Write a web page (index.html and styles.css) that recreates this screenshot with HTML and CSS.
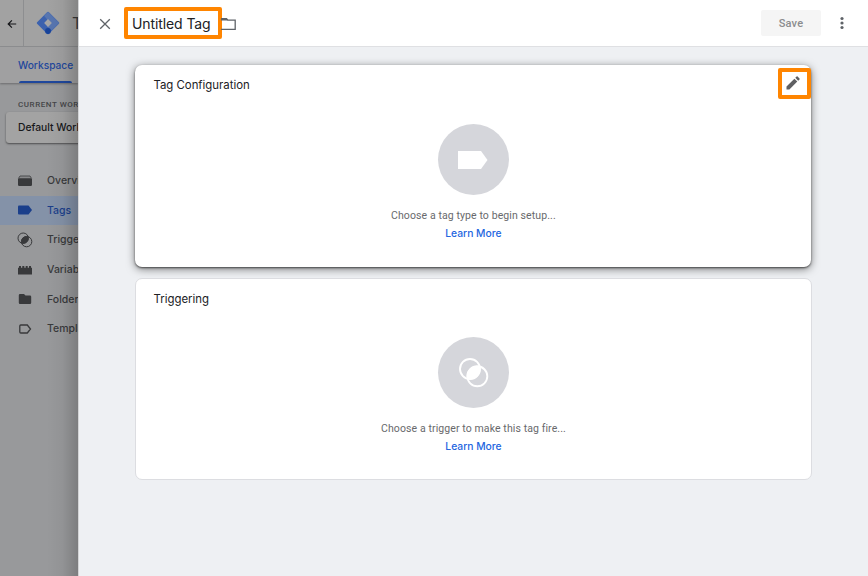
FILE: index.html
```html
<!DOCTYPE html>
<html lang="en">
<head>
<meta charset="utf-8">
<title>Untitled Tag</title>
<link rel="stylesheet" href="styles.css">
</head>
<body>
<div class="app">
  <aside class="sidebar">
    <div class="brand">
      <div class="back"><svg width="10" height="10" viewBox="0 0 10 10"><path d="M9.200 5H1.300M4.900 1.300L1.200 5l3.700 3.700" fill="none" stroke="#141518" stroke-width="1.200"/></svg></div>
      <svg class="logo" width="24" height="24" viewBox="0 0 24 24"><path d="M12 1.800L22.200 12 12 22.200 1.800 12z" fill="#3c62ae" stroke="#3c62ae" stroke-width="2" stroke-linejoin="round"/><path d="M9 4.800L12 1.800 22.200 12l-6.500 6.500-3.600-3.400 3.200-3.100z" fill="#5876b0" stroke="#5876b0" stroke-width="1.500" stroke-linejoin="round"/><path d="M12 8.100l3.900 3.900-3.900 3.900L8.100 12z" fill="#a4a5a7"/><circle cx="12" cy="20" r="2.900" fill="#17439a"/></svg>
      <span class="product">Tag</span>
    </div>
    <div class="tabs"><span class="tab">Workspace</span></div>
    <div class="caption">CURRENT WORKSPACE</div>
    <div class="workspace">Default Workspace</div>
    <nav class="nav">
      <a class="item"><svg width="16" height="14" viewBox="0 0 16 14"><path d="M3 2h10l1.600 2.500H1.400z" fill="#88898b" stroke="#4b4c4e"/><path d="M1 5h14v5.800q0 1.200-1.200 1.200H2.200Q1 12 1 10.800z" fill="#38393b"/></svg><span>Overview</span></a>
      <a class="item active"><svg width="16" height="14" viewBox="0 0 16 14"><path d="M2 2.500h9.500l3.500 4.500-3.500 4.500H2q-1 0-1-1v-7q0-1 1-1z" fill="#1b3f8b"/></svg><span>Tags</span></a>
      <a class="item"><svg width="16" height="16" viewBox="0 0 16 16"><g fill="none" stroke="#38393b"><circle cx="6.200" cy="6.200" r="5.200"/><circle cx="9.600" cy="9.600" r="5.200"/></g><path d="M4.550 11.250A5.200 5.200 0 0 1 11.250 4.550 5.200 5.200 0 0 1 4.550 11.250z" fill="#38393b"/></svg><span>Triggers</span></a>
      <a class="item"><svg width="16" height="14" viewBox="0 0 16 14"><path d="M1 11.500V4.700h1V3h2v1.700h1.300V3h2v1.700h1.400V3h2v1.700H12V3h2v1.700h1v6.800z" fill="#38393b"/></svg><span>Variables</span></a>
      <a class="item"><svg width="16" height="14" viewBox="0 0 16 14"><path d="M3 2h4l1.500 1.600H13q1.200 0 1.200 1.200v6q0 1.200-1.200 1.200H3q-1.200 0-1.200-1.200V3.200Q1.800 2 3 2z" fill="#38393b"/></svg><span>Folders</span></a>
      <a class="item"><svg width="16" height="14" viewBox="0 0 16 14"><path d="M3.800 3h6.500l3.200 4-3.200 4H3.800q-1 0-1-1V4q0-1 1-1z" fill="none" stroke="#38393b" stroke-width="1.300"/></svg><span>Templates</span></a>
    </nav>
  </aside>
  <main class="drawer">
    <header class="header">
      <svg class="close" width="12" height="12" viewBox="0 0 12 12"><path d="M1.200 1.200l9.600 9.600M10.800 1.200l-9.600 9.600" fill="none" stroke="#5f6368" stroke-width="1.300"/></svg>
      <div class="title">Untitled Tag</div>
      <svg class="folder" width="15" height="12" viewBox="0 0 15 12"><path d="M0 .7h5.500L7 2.200h7.200v9.100H0" fill="none" stroke="#5f6368" stroke-width="1.300"/><path d="M0 .5h5.500L7 2.500H0z" fill="#5f6368"/></svg>
      <button class="save">Save</button>
      <svg class="more" width="4" height="14" viewBox="0 0 4 14"><g fill="#5f6368"><circle cx="2" cy="2.500" r="1.600"/><circle cx="2" cy="7" r="1.600"/><circle cx="2" cy="11.500" r="1.600"/></g></svg>
    </header>
    <section class="card raised">
      <h2>Tag Configuration</h2>
      <span class="edit"><svg width="16" height="16" viewBox="0 0 16 16"><path d="M1.500 11.600l7.900-7.900 2.900 2.900-7.900 7.900H1.500zM10.300 2.800l1.300-1.300q.5-.5 1 0l1.900 1.900q.5.500 0 1l-1.300 1.300z" fill="#5f6063"/></svg></span>
      <div class="disc"><svg width="30" height="18" viewBox="0 0 30 18"><path d="M0 0h23l6.500 9L23 18H0z" fill="#fff"/></svg></div>
      <p>Choose a tag type to begin setup...</p>
      <a class="learn">Learn More</a>
    </section>
    <section class="card">
      <h2>Triggering</h2>
      <div class="disc"><svg width="30" height="30" viewBox="0 0 30 30"><g fill="none" stroke="#fff" stroke-width="1.900"><circle cx="11" cy="11" r="10"/><circle cx="18.300" cy="18.300" r="10"/></g><path d="M8.340 20.960A10 10 0 0 1 20.960 8.340 10 10 0 0 1 8.340 20.960z" fill="#fff"/></svg></div>
      <p>Choose a trigger to make this tag fire...</p>
      <a class="learn">Learn More</a>
    </section>
  </main>
</div>
</body>
</html>
```

FILE: styles.css
```css
* { box-sizing: border-box; }
body { margin: 0; font-family: Roboto, sans-serif; overflow: hidden; }
.app { display: flex; width: 868px; height: 576px; background: #eef0f3; }
.sidebar { position: relative; flex: none; width: 78px; overflow: hidden; background: #98999b; white-space: nowrap; }
.sidebar::after { content: ""; position: absolute; inset: 0; background: linear-gradient(90deg, transparent 60%, rgba(0,0,0,.04) 80%, rgba(0,0,0,.18)); }
.brand { display: flex; align-items: center; height: 47px; background: #a2a2a2; border-bottom: 1px solid #8e8f91; }
.back { flex: none; display: flex; align-items: center; width: 24px; height: 46px; padding: 2px 0 0 7px; border-right: 1px solid #8d8e90; }
.logo { margin-left: 12px; flex: none; }
.product { margin-left: 12px; font: 16px Inter, sans-serif; color: #38393b; }
.tabs { height: 36px; padding-left: 18px; background: #a0a0a1; box-shadow: 0 1px 2px rgba(0,0,0,.3); }
.tab { display: block; position: relative; width: 64px; height: 36px; font: 500 10.200px/37px Inter, sans-serif; color: #1f479c; }
.tab::after { content: ""; position: absolute; left: 1px; right: 10px; bottom: 0; height: 2px; border-radius: 2px 2px 0 0; background: #1f479c; }
.caption { margin: 15px 0 0 18px; font: 500 8px/13px Roboto, sans-serif; letter-spacing: .55px; color: #454648; }
.workspace { width: 110px; height: 31px; margin: 1px 0 0 6px; padding-left: 12px; border-radius: 3px; background: #a3a3a3; box-shadow: 0 1px 2px rgba(0,0,0,.5); font: 500 10.300px/31px Inter, sans-serif; color: #17181a; }
.nav { margin-top: 23px; }
.item { display: flex; align-items: center; height: 29.600px; padding-left: 17px; font: 500 10.500px Inter, sans-serif; color: #38393b; }
.item svg { flex: none; margin-right: 14px; }
.active { background: #8492a8; color: #1b3f8b; }
.drawer { flex: 1; border-left: 1px solid #d3d4d6; }
.header { display: flex; align-items: center; height: 47px; background: #fff; border-bottom: 1px solid #dfe0e3; padding: 0 24px 0 20px; }
.close { margin-top: 1px; }
.title { flex: none; width: 98px; height: 32px; margin-left: 13px; padding-left: 4px; border: 4px solid #ff8500; font: 14px/25px Inter, sans-serif; letter-spacing: -.1px; color: #202124; border-radius: 2px; white-space: nowrap; }
.folder { flex: none; margin: 1px 0 0 -1px; }
.save { width: 60px; height: 26px; margin-left: auto; padding: 0; border: 0; border-radius: 2px; background: #f5f5f5; color: #8b8c8e; font: 500 11px Roboto, sans-serif; letter-spacing: .2px; }
.more { margin-left: 19px; }
.card { position: relative; display: flex; flex-direction: column; align-items: center; width: 677px; height: 202px; margin: 11px 0 0 56px; padding-top: 11px; border: 1px solid #dcdde1; border-radius: 7px; background: #fff; }
.raised { width: 676px; margin: 18px 0 0 56.400px; border: 0; padding-top: 12px; box-shadow: 0 1px 2px rgba(0,0,0,.55), 0 2px 8px rgba(0,0,0,.5); }
h2 { align-self: flex-start; margin: 0 0 0 17.500px; font: 11.400px/18px Inter, sans-serif; color: #202124; }
.raised h2 { margin: -1px 0 1px 18px; }
.edit { position: absolute; right: .5px; top: 3px; display: flex; align-items: center; justify-content: center; width: 33px; height: 31px; padding: 0 2px 2px 0; border: 4px solid #ff8500; border-radius: 2px; }
.disc { flex: none; display: flex; align-items: center; justify-content: center; width: 71px; height: 71px; margin-top: 29.400px; border-radius: 50%; background: #d5d6db; }
p { margin: 12.600px 0 0; font: 10.500px/16px Roboto, sans-serif; letter-spacing: .1px; color: #68696c; }
.learn { margin-top: 1px; font: 500 10.300px/16px Inter, sans-serif; color: #2466df; }
```
